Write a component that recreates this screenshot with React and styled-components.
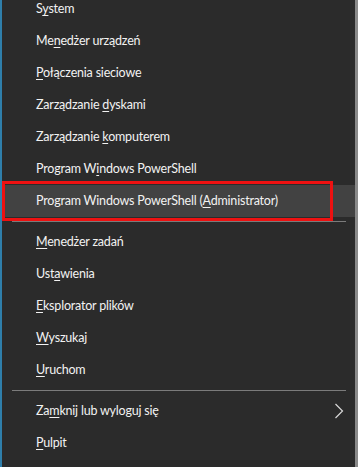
import React from 'react'
import styled, { createGlobalStyle } from 'styled-components'

const groups = [
  [
    'S&ystem',
    'Me&nedżer urządzeń',
    '&Połączenia sieciowe',
    'Zarządzanie &dyskami',
    'Zarządzanie &komputerem',
    'Program W&indows PowerShell',
    { label: 'Program Windows PowerShell (&Administrator)', active: true },
  ],
  [
    '&Menedżer zadań',
    'Ust&awienia',
    '&Eksplorator plików',
    '&Wyszukaj',
    '&Uruchom',
  ],
  [
    { label: 'Za&mknij lub wyloguj się', submenu: true },
    '&Pulpit',
  ],
]

const Label = ({ text }) => {
  const i = text.indexOf('&')
  if (i < 0) return text
  return (
    <>
      {text.slice(0, i)}
      <Key>{text[i + 1]}</Key>
      {text.slice(i + 2)}
    </>
  )
}

const Chevron = () => (
  <svg width="10" height="16" viewBox="0 0 10 16">
    <path d="M1.5 1 L8.5 8 L1.5 15" fill="none" stroke="#d8d8d8" strokeWidth="1.2" />
  </svg>
)

const App = () => {
  return (
    <>
      <GlobalStyle />
      <Screen>
        <EdgeLeft />
        <Menu>
          <List>
            {groups.map((group, gi) => (
              <React.Fragment key={gi}>
                {gi > 0 && <Separator />}
                {group.map((entry) => {
                  const item = typeof entry === 'string' ? { label: entry } : entry
                  return (
                    <Item key={item.label} $active={item.active}>
                      <Text>
                        <Label text={item.label} />
                      </Text>
                      {item.submenu && <Chevron />}
                      {item.active && <Marker />}
                    </Item>
                  )
                })}
              </React.Fragment>
            ))}
          </List>
        </Menu>
        <EdgeRight />
      </Screen>
    </>
  )
}

export default App

const GlobalStyle = createGlobalStyle`
  html, body {
    margin: 0;
    padding: 0;
    background: #2b2b2b;
  }
  body {
    font-family: Lato, "Noto Sans", sans-serif;
  }
`;
const Screen = styled.div`
  display: flex;
  width: 358px;
  height: 467px;
  overflow: hidden;
`;
const EdgeLeft = styled.div`
  width: 2px;
  flex-shrink: 0;
  background: #2f7fab;
`;
const EdgeRight = styled.div`
  width: 3px;
  flex-shrink: 0;
  background: #8a8a8a;
`;
const Menu = styled.div`
  flex: 1;
  background: #2b2b2b;
  overflow: hidden;
`;
const List = styled.div`
  display: flex;
  flex-direction: column;
  margin-top: -7px;
`;
const Item = styled.div`
  position: relative;
  height: 32px;
  margin: 0 0 0 1px;
  padding: 0 11px 1px 33px;
  box-sizing: border-box;
  display: flex;
  align-items: center;
  justify-content: space-between;
  background: ${({ $active }) => ($active ? '#424242' : 'transparent')};
  color: #f2f2f2;
  font-size: 12.5px;
  letter-spacing: -0.2px;
`;
const Text = styled.span`
  white-space: nowrap;
`;
const Key = styled.span`
  text-decoration: underline;
  text-underline-offset: 2px;
  text-decoration-thickness: 1px;
`;
const Marker = styled.div`
  position: absolute;
  top: -4px;
  left: -1px;
  width: 331px;
  height: 40px;
  box-sizing: border-box;
  border: 3px solid #ee1111;
  pointer-events: none;
`;
const Separator = styled.div`
  height: 1px;
  margin: 4px 9px 4px 10px;
  background: #7b7b7b;
`;
